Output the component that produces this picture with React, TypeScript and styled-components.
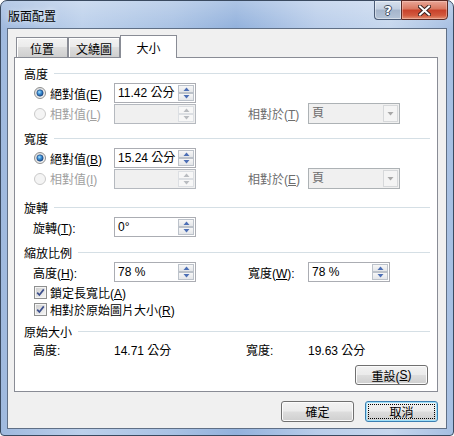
import React from 'react';
import styled, { createGlobalStyle, css } from 'styled-components';

const GlobalStyle = createGlobalStyle`
  html, body {
    margin: 0;
    padding: 0;
  }
  body {
    width: 454px;
    height: 436px;
    overflow: hidden;
    background: #ffffff;
    font-family: "Liberation Sans", "Noto Sans CJK TC", sans-serif;
    font-size: 12px;
    color: #000;
  }
`;

const FONT = `"Liberation Sans", "Noto Sans CJK TC", sans-serif`;

const Window = styled.div`
  box-sizing: border-box;
  width: 454px;
  height: 436px;
  border: 1px solid #3a4a60;
  border-radius: 7px 7px 4px 4px;
  padding: 0 6px 6px 6px;
  display: flex;
  flex-direction: column;
  background:
    linear-gradient(180deg, rgba(255, 255, 255, 0.25) 0px, rgba(255, 255, 255, 0) 28px),
    linear-gradient(90deg, #9fb9de 0%, #bcd0eb 18%, #a9c2e4 38%, #92b1dc 52%, #b9cdea 70%, #c6d7ee 86%, #a6bfe2 100%);
`;

const TitleBar = styled.div`
  height: 27px;
  display: flex;
  align-items: flex-start;
`;

const Title = styled.div`
  flex: 1;
  align-self: center;
  padding: 2px 0 0 1px;
  font-size: 12px;
  color: #000;
  text-shadow: 0 0 6px rgba(255, 255, 255, 0.9);
`;

const CaptionButton = styled.div<{ $kind: 'help' | 'close' }>`
  box-sizing: border-box;
  height: 20px;
  margin-top: -1px;
  display: flex;
  align-items: center;
  justify-content: center;
  border: 1px solid #4b5c77;
  ${({ $kind }) =>
    $kind === 'help'
      ? css`
          width: 27px;
          border-right: none;
          border-radius: 0 0 0 4px;
          background: linear-gradient(180deg, #d7e1ee 0%, #c2cfe1 45%, #a5b5cb 50%, #b4c3d7 100%);
          box-shadow: inset 0 0 0 1px rgba(255, 255, 255, 0.45);
        `
      : css`
          width: 47px;
          margin-right: -1px;
          border-color: #5b2a24;
          border-radius: 0 0 4px 0;
          background: linear-gradient(180deg, #e9a697 0%, #d9775f 45%, #c8412a 50%, #d25a3e 80%, #e39174 100%);
          box-shadow: inset 0 0 0 1px rgba(255, 220, 210, 0.4);
        `}
`;

const HelpGlyph = styled.span`
  font-family: "DejaVu Sans", sans-serif;
  font-weight: bold;
  font-size: 13px;
  line-height: 1;
  color: #fff;
  text-shadow: 1px 0 0 #3c4a5e, -1px 0 0 #3c4a5e, 0 1px 0 #3c4a5e, 0 -1px 0 #3c4a5e;
`;

const CloseIcon = () => (
  <svg width="13" height="11" viewBox="0 0 13 11">
    <path d="M2 1.5 L11 9.5 M11 1.5 L2 9.5" stroke="#3b2320" strokeWidth="4" strokeLinecap="square" />
    <path d="M2 1.5 L11 9.5 M11 1.5 L2 9.5" stroke="#ffffff" strokeWidth="2" strokeLinecap="square" />
  </svg>
);

const Client = styled.div`
  flex: 1;
  box-sizing: border-box;
  border: 1px solid #5f6f86;
  background: #f0f0f0;
  padding: 6px 8px 6px 6px;
  display: flex;
  flex-direction: column;
`;

const TabStrip = styled.div`
  height: 22px;
  padding-left: 2px;
  display: flex;
  align-items: flex-end;
`;

const Tab = styled.div<{ $w: number; $active?: boolean }>`
  box-sizing: border-box;
  width: ${(p) => p.$w}px;
  border: 1px solid #898c95;
  border-bottom: none;
  display: flex;
  align-items: center;
  justify-content: center;
  font-size: 12px;
  ${({ $active }) =>
    $active
      ? css`
          height: 23px;
          margin-bottom: -1px;
          padding-top: 1px;
          position: relative;
          z-index: 1;
          background: #ffffff;
        `
      : css`
          height: 20px;
          padding-top: 1px;
          background: linear-gradient(180deg, #f3f3f3 0%, #ebebeb 45%, #dddddd 50%, #cfcfcf 100%);
          box-shadow: inset 1px 1px 0 #ffffff;
        `}
`;

const Panel = styled.div`
  box-sizing: border-box;
  height: 335px;
  border: 1px solid #898c95;
  background: #ffffff;
  padding: 0 7px 0 9px;
  display: flex;
  flex-direction: column;
`;

const GroupHeader = styled.div<{ $mt: number }>`
  height: 15px;
  margin-top: ${(p) => p.$mt}px;
  display: flex;
  align-items: center;
  white-space: nowrap;
`;

const HeaderRule = styled.div`
  flex: 1;
  height: 1px;
  margin: 0 0 0 6px;
  background: #d5dfe5;
`;

const Row = styled.div<{ $h: number; $mt: number }>`
  height: ${(p) => p.$h}px;
  margin-top: ${(p) => p.$mt}px;
  display: grid;
  grid-template-columns: 90px 134px 60px auto;
  align-items: center;
  white-space: nowrap;
`;

const Text = styled.span<{ $pl?: number; $color?: string }>`
  padding-left: ${(p) => p.$pl ?? 0}px;
  color: ${(p) => p.$color ?? '#000'};
`;

const Key = styled.span`
  text-decoration: underline;
`;

const OptionLabel = styled.label<{ $disabled?: boolean }>`
  display: flex;
  align-items: center;
  padding-left: 10px;
  gap: 4px;
  color: ${(p) => (p.$disabled ? '#a0a0a0' : '#000')};
`;

const CheckRow = styled.label<{ $mt: number }>`
  height: 16px;
  margin-top: ${(p) => p.$mt}px;
  padding-left: 10px;
  display: flex;
  align-items: center;
  gap: 3px;
  white-space: nowrap;
`;

const Field = styled.div<{ $w: number; $disabled?: boolean }>`
  box-sizing: border-box;
  width: ${(p) => p.$w}px;
  height: 20px;
  border: 1px solid ${(p) => (p.$disabled ? '#b5b9bf' : '#abadb3')};
  background: ${(p) => (p.$disabled ? '#f0f0f0' : '#ffffff')};
  display: flex;
  align-items: stretch;
`;

const FieldValue = styled.div`
  flex: 1;
  padding-left: 3px;
  line-height: 18px;
  color: #000;
`;

const Spin = styled.div`
  width: 16px;
  margin: 1px 1px 1px 0;
  display: flex;
  flex-direction: column;
`;

const SpinHalf = styled.div<{ $disabled?: boolean }>`
  flex: 1;
  box-sizing: border-box;
  border: 1px solid ${(p) => (p.$disabled ? '#dcdfe3' : '#bcc2ca')};
  background: ${(p) => (p.$disabled ? '#f7f7f7' : 'linear-gradient(180deg, #f7f7f7 0%, #e4e6e9 100%)')};
  display: flex;
  align-items: center;
  justify-content: center;
`;

const Combo = styled.div`
  box-sizing: border-box;
  width: 92px;
  height: 21px;
  border: 1px solid #adb2b5;
  background: #f0f0f0;
  display: flex;
  align-items: stretch;
`;

const ComboValue = styled.div`
  flex: 1;
  padding-left: 3px;
  line-height: 19px;
  color: #6d6d6d;
`;

const ComboButton = styled.div`
  width: 15px;
  margin: 1px 1px 1px 0;
  box-sizing: border-box;
  border: 1px solid #d6d8da;
  background: #f4f4f4;
  display: flex;
  align-items: center;
  justify-content: center;
`;

const ResetRow = styled.div`
  margin-top: 10px;
  padding-right: 2px;
  display: flex;
  justify-content: flex-end;
`;

const Footer = styled.div`
  margin-top: 9px;
  display: flex;
  justify-content: flex-end;
  gap: 11px;
`;

const PushButton = styled.div<{ $default?: boolean; $h?: number }>`
  box-sizing: border-box;
  width: 73px;
  height: ${(p) => p.$h ?? 21}px;
  border: 1px solid ${(p) => (p.$default ? '#3c7fb1' : '#707070')};
  border-radius: 3px;
  font-family: ${FONT};
  font-size: 12px;
  color: #000;
  display: flex;
  align-items: center;
  justify-content: center;
  background: linear-gradient(180deg, #f2f2f2 0%, #ebebeb 48%, #dddddd 52%, #cfcfcf 100%);
  box-shadow: inset 0 0 0 1px ${(p) => (p.$default ? '#9fe1fb' : '#fbfbfb')};
  padding: 2px;
`;

const FocusRect = styled.div`
  box-sizing: border-box;
  width: 100%;
  height: 100%;
  border: 1px dotted #000;
  display: flex;
  align-items: center;
  justify-content: center;
`;

const Arrow = ({ up, color }: { up?: boolean; color: string }) => (
  <svg width="7" height="4" viewBox="0 0 7 4">
    <path d={up ? 'M0.5 4 L3.5 0.5 L6.5 4 Z' : 'M0.5 0 L6.5 0 L3.5 3.5 Z'} fill={color} />
  </svg>
);

const Radio = ({ checked, disabled }: { checked?: boolean; disabled?: boolean }) => (
  <svg width="12" height="12" viewBox="0 0 12 12">
    <defs>
      <linearGradient id="rbg" x1="0" y1="0" x2="1" y2="1">
        <stop offset="0" stopColor="#d9d9d9" />
        <stop offset="1" stopColor="#fbfbfb" />
      </linearGradient>
      <radialGradient id="rdot" cx="0.4" cy="0.35" r="0.7">
        <stop offset="0" stopColor="#a9e4ff" />
        <stop offset="0.45" stopColor="#3c8fd6" />
        <stop offset="1" stopColor="#174a8a" />
      </radialGradient>
    </defs>
    <circle
      cx="6"
      cy="6"
      r="5.5"
      fill={disabled ? '#f4f4f4' : 'url(#rbg)'}
      stroke={disabled ? '#c9c9c9' : '#8e8f8f'}
    />
    {checked && <circle cx="6" cy="6" r="3.2" fill="url(#rdot)" stroke="#1d3f74" strokeWidth="0.6" />}
  </svg>
);

const Checkbox = () => (
  <svg width="13" height="13" viewBox="0 0 13 13">
    <defs>
      <linearGradient id="cbg" x1="0" y1="0" x2="1" y2="1">
        <stop offset="0" stopColor="#cfcfcf" />
        <stop offset="1" stopColor="#f4f4f4" />
      </linearGradient>
    </defs>
    <rect x="0.5" y="0.5" width="12" height="12" fill="#f4f4f4" stroke="#8e8f8f" />
    <rect x="2" y="2" width="9" height="9" fill="url(#cbg)" />
    <path d="M3.2 6.6 L5.4 9 L9.8 3.4" fill="none" stroke="#3c4f8c" strokeWidth="1.7" />
  </svg>
);

const SpinField = ({ value, disabled, w = 82 }: { value?: string; disabled?: boolean; w?: number }) => {
  const c = disabled ? '#b9bcc0' : '#4d6fb5';
  return (
    <Field $w={w} $disabled={disabled}>
      <FieldValue>{value}</FieldValue>
      <Spin>
        <SpinHalf $disabled={disabled}>
          <Arrow up color={c} />
        </SpinHalf>
        <SpinHalf $disabled={disabled}>
          <Arrow color={c} />
        </SpinHalf>
      </Spin>
    </Field>
  );
};

const PageCombo = () => (
  <Combo>
    <ComboValue>頁</ComboValue>
    <ComboButton>
      <Arrow color="#a8a8a8" />
    </ComboButton>
  </Combo>
);

export default function App() {
  return (
    <>
      <GlobalStyle />
      <Window>
        <TitleBar>
          <Title>版面配置</Title>
          <CaptionButton $kind="help">
            <HelpGlyph>?</HelpGlyph>
          </CaptionButton>
          <CaptionButton $kind="close">
            <CloseIcon />
          </CaptionButton>
        </TitleBar>
        <Client>
          <TabStrip>
            <Tab $w={52}>位置</Tab>
            <Tab $w={52}>文繞圖</Tab>
            <Tab $w={57} $active>
              大小
            </Tab>
          </TabStrip>
          <Panel>
            <GroupHeader $mt={8}>
              高度
              <HeaderRule />
            </GroupHeader>
            <Row $h={20} $mt={2}>
              <OptionLabel>
                <Radio checked />
                <span>
                  絕對值(<Key>E</Key>)
                </span>
              </OptionLabel>
              <SpinField value="11.42 公分" />
            </Row>
            <Row $h={21} $mt={0}>
              <OptionLabel $disabled>
                <Radio disabled />
                <span>
                  相對值(<Key>L</Key>)
                </span>
              </OptionLabel>
              <SpinField disabled />
              <Text $color="#6d6d6d">
                相對於(<Key>T</Key>)
              </Text>
              <PageCombo />
            </Row>

            <GroupHeader $mt={7}>
              寬度
              <HeaderRule />
            </GroupHeader>
            <Row $h={20} $mt={2}>
              <OptionLabel>
                <Radio checked />
                <span>
                  絕對值(<Key>B</Key>)
                </span>
              </OptionLabel>
              <SpinField value="15.24 公分" />
            </Row>
            <Row $h={21} $mt={0}>
              <OptionLabel $disabled>
                <Radio disabled />
                <span>
                  相對值(<Key>I</Key>)
                </span>
              </OptionLabel>
              <SpinField disabled />
              <Text $color="#6d6d6d">
                相對於(<Key>E</Key>)
              </Text>
              <PageCombo />
            </Row>

            <GroupHeader $mt={11}>
              旋轉
              <HeaderRule />
            </GroupHeader>
            <Row $h={20} $mt={2}>
              <Text $pl={9}>
                旋轉(<Key>T</Key>):
              </Text>
              <SpinField value="0°" />
            </Row>

            <GroupHeader $mt={8}>
              縮放比例
              <HeaderRule />
            </GroupHeader>
            <Row $h={20} $mt={2}>
              <Text $pl={9}>
                高度(<Key>H</Key>):
              </Text>
              <SpinField value="78 %" />
              <Text>
                寬度(<Key>W</Key>):
              </Text>
              <SpinField value="78 %" />
            </Row>
            <CheckRow $mt={2}>
              <Checkbox />
              <span>
                鎖定長寬比(<Key>A</Key>)
              </span>
            </CheckRow>
            <CheckRow $mt={1}>
              <Checkbox />
              <span>
                相對於原始圖片大小(<Key>R</Key>)
              </span>
            </CheckRow>

            <GroupHeader $mt={7}>
              原始大小
              <HeaderRule />
            </GroupHeader>
            <Row $h={14} $mt={2}>
              <Text $pl={9}>高度:</Text>
              <Text>14.71 公分</Text>
              <Text $pl={0} style={{ marginLeft: -2 }}>
                寬度:
              </Text>
              <Text>19.63 公分</Text>
            </Row>
            <ResetRow>
              <PushButton $h={20}>
                重設(<Key>S</Key>)
              </PushButton>
            </ResetRow>
          </Panel>
          <Footer>
            <PushButton>確定</PushButton>
            <PushButton $default>
              <FocusRect>取消</FocusRect>
            </PushButton>
          </Footer>
        </Client>
      </Window>
    </>
  );
}
